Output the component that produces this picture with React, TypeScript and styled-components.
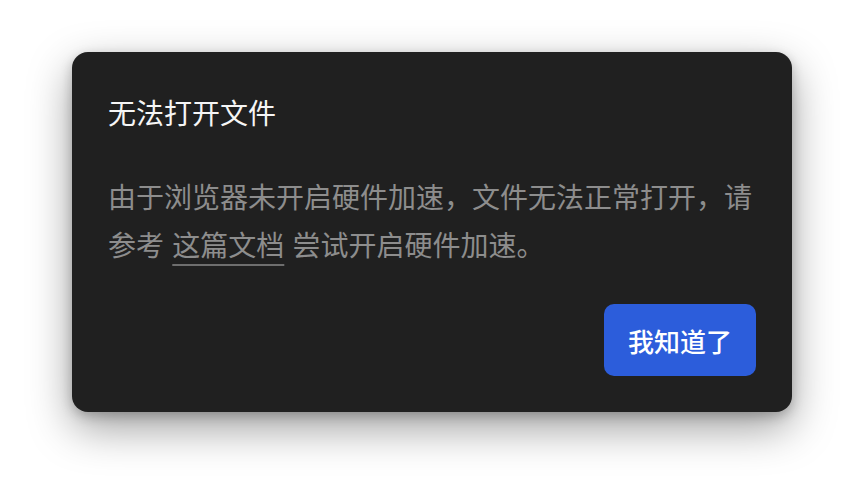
import React from "react";
import styled, { createGlobalStyle } from "styled-components";

const Global = createGlobalStyle`
  html, body { margin: 0; padding: 0; background: #ffffff; }
  body { font-family: "Noto Sans CJK SC", "Noto Sans", sans-serif; }
`;

const Page = styled.div`
  display: flex;
  justify-content: center;
  align-items: flex-start;
  padding-top: 52px;
  height: 504px;
  box-sizing: border-box;
`;

const Dialog = styled.div`
  width: 720px;
  box-sizing: border-box;
  padding: 36px;
  background: #202020;
  border-radius: 16px;
  box-shadow: 0 16px 44px rgba(0, 0, 0, 0.38), 0 4px 12px rgba(0, 0, 0, 0.22);
  display: flex;
  flex-direction: column;
  gap: 36px;
`;

const Title = styled.h2`
  margin: 0;
  font-size: 28px;
  line-height: 48px;
  font-weight: 400;
  color: #f5f5f5;
`;

const Body = styled.p`
  margin: 0;
  font-size: 28px;
  line-height: 48px;
  font-weight: 400;
  color: #8d8d8d;
`;

const DocLink = styled.a`
  margin: 0 2px;
  color: #8d8d8d;
  text-decoration: underline;
  text-decoration-color: #6e6e6e;
  text-decoration-thickness: 2px;
  text-underline-offset: 8px;
  cursor: pointer;
`;

const Footer = styled.div`
  display: flex;
  justify-content: flex-end;
`;

const PrimaryButton = styled.button`
  width: 152px;
  height: 72px;
  border: none;
  border-radius: 10px;
  background: #2c5ddb;
  color: #ffffff;
  font-family: "Noto Sans CJK SC", "Noto Sans", sans-serif;
  font-size: 26px;
  font-weight: 500;
  cursor: pointer;
`;

export default function App() {
  return (
    <>
      <Global />
      <Page>
        <Dialog>
          <Title>无法打开文件</Title>
          <Body>
            由于浏览器未开启硬件加速，文件无法正常打开，请参考 <DocLink>这篇文档</DocLink> 尝试开启硬件加速。
          </Body>
          <Footer>
            <PrimaryButton>我知道了</PrimaryButton>
          </Footer>
        </Dialog>
      </Page>
    </>
  );
}
